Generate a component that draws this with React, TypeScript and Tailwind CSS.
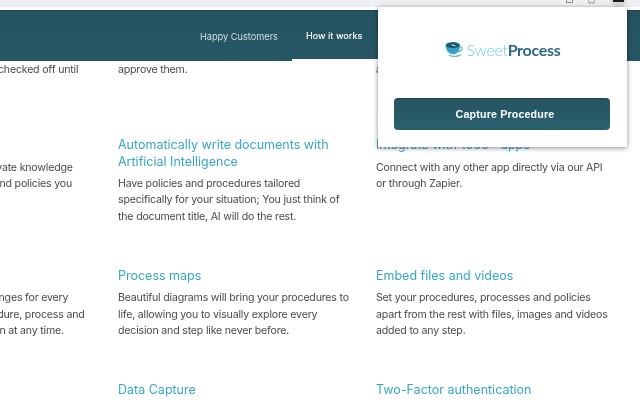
const inter = "font-['Inter',sans-serif]";

type Item = { title?: string; lines: string[] };

function Feature({ title, lines }: Item) {
  return (
    <div>
      {title && (
        <h3 className="mb-[6px] text-[12.5px] leading-[16.5px] font-normal text-[#37a6c7] whitespace-pre-line">{title}</h3>
      )}
      {lines.map((l) => (
        <p key={l} className="text-[10.6px] leading-[16.2px] tracking-[-0.19px] text-[#454a4d] whitespace-nowrap">{l}</p>
      ))}
    </div>
  );
}

function Logo() {
  return (
    <div className="flex items-center gap-[3px]">
      <svg width="19" height="16" viewBox="0 0 20 17">
        <path d="M0.5 3.5 C0.5 1 5 0 8.5 0 C12 0 16 1 16 3.5 C16 9 13 13 8.5 13 C4 13 0.5 9 0.5 3.5 Z" fill="#33a0c4" />
        <ellipse cx="8.2" cy="3.4" rx="7" ry="2.9" fill="#1f5566" />
        <path d="M6 2.4 L10 3.2 L11.5 4.6 L8 4 Z" fill="#e8f4f7" />
        <path d="M15.5 5 C18 5 19 6.5 17.5 8.5 C16.5 9.6 15 10.2 13.5 10.2" fill="none" stroke="#4fb1d0" strokeWidth="1.2" />
        <path d="M4 14 C7 16 13 16 17 13.6 C14 15.2 7 15.8 4 14 Z" fill="#2a7f9c" stroke="#59b6d2" strokeWidth="0.8" />
      </svg>
      <span className="font-['Lato',sans-serif] text-[16px] leading-[20px] tracking-[-0.3px] whitespace-nowrap">
        <span className="font-light text-[#6fcbe6]">Sweet</span>
        <span className="font-bold text-[#2b6a7f]">Process</span>
      </span>
    </div>
  );
}

export default function App() {
  return (
    <div className={`relative w-[640px] h-[400px] overflow-hidden bg-white blur-[0.3px] ${inter}`}>
      <div className="h-[7px] bg-[#eeeff1] flex justify-end items-start pr-[13px] overflow-hidden">
        <div className="w-[7px] h-[3px] mr-[15px] border border-t-0 border-[#8a8c8f]" />
        <svg width="7" height="4" viewBox="0 0 7 4" className="mr-[15px]">
          <path d="M0 0 L1.5 3.5 L3.5 2.3 L5.5 3.5 L7 0" fill="none" stroke="#77797c" strokeWidth="0.8" />
        </svg>
        <div className="w-[17px] h-[17px] -mt-[10px] rounded-full bg-[#d9dadc] flex justify-center items-end pb-[5px]">
          <div className="w-[11px] h-[3px] bg-[#1c1c1e]" />
        </div>
      </div>
      <div className="h-[3px]" />

      <header className="h-[51px] flex pl-[186px] bg-gradient-to-b from-[#265360] to-[#275765] border-t border-[#1f4753]">
        <a className="w-[106px] pl-[14px] pt-[1px] flex items-center text-[9.2px] font-normal text-[#d4dfe2] whitespace-nowrap">Happy Customers</a>
        <a className="w-[90px] pl-[14px] pt-[2px] flex items-center text-[9.1px] font-medium text-white whitespace-nowrap border-b-2 border-white">How it works</a>
      </header>

      <main className="w-[772px] -ml-[140px] pt-[1px] grid grid-cols-[232px_232px_232px] gap-x-[26px] gap-y-[43px]">
        <div className="pb-[16px]"><Feature lines={["Tasks in a checklist must be checked off until"]} /></div>
        <Feature lines={["approve them."]} />
        <Feature lines={["approve them."]} />

        <Feature title="Knowledge base" lines={["Create your own indexed private knowledge", "base with all the processes and policies you"]} />
        <Feature title={"Automatically write documents with\nArtificial Intelligence"} lines={["Have policies and procedures tailored", "specifically for your situation; You just think of", "the document title, AI will do the rest."]} />
        <Feature title="Integrate with 1000+ apps" lines={["Connect with any other app directly via our API", "or through Zapier."]} />

        <Feature title="Version history" lines={["Clear history of all of the changes for every", "edits made to any one procedure, process and", "restore it to a previous version at any time."]} />
        <Feature title="Process maps" lines={["Beautiful diagrams will bring your procedures to", "life, allowing you to visually explore every", "decision and step like never before."]} />
        <Feature title="Embed files and videos" lines={["Set your procedures, processes and policies", "apart from the rest with files, images and videos", "added to any step."]} />

        <Feature title="Branding" lines={[]} />
        <Feature title="Data Capture" lines={[]} />
        <Feature title="Two-Factor authentication" lines={[]} />
      </main>

      <div className="absolute left-[378px] top-[7px] w-[249px] h-[140px] bg-white shadow-[0_1px_5px_rgba(0,0,0,0.45)] flex flex-col items-center pt-[33px] px-[16px]">
        <Logo />
        <button className="self-start mt-[38px] w-[216px] h-[32px] shrink-0 pl-[6px] rounded-[4px] bg-gradient-to-b from-[#265461] to-[#2a606e] border-t border-[#1f4652] text-white font-['Liberation_Sans',sans-serif] font-bold text-[10.7px] tracking-[0.15px]">
          Capture Procedure
        </button>
      </div>
    </div>
  );
}
